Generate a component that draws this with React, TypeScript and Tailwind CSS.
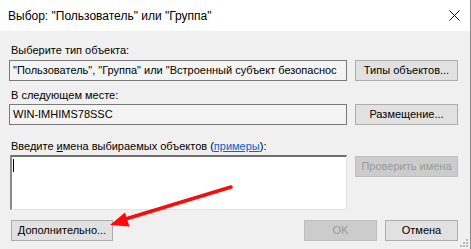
import React from 'react';

const btn = 'flex items-center justify-center h-[21px] bg-[#e1e1e1] border border-[#adadad] text-black';
const btnOff = 'flex items-center justify-center h-[21px] bg-[#cccccc] border border-[#bfbfbf] text-[#9a9a9a]';

function CloseIcon() {
  return (
    <svg width="11" height="11" viewBox="0 0 11 11">
      <path d="M0.5 0.5 L10.5 10.5 M10.5 0.5 L0.5 10.5" stroke="#111" strokeWidth="1" />
    </svg>
  );
}

function Grip() {
  const dots = [[5, 0], [2, 3], [5, 3], [-1, 6], [2, 6], [5, 6]];
  return (
    <svg width="8" height="9" viewBox="-1 0 8 9">
      {dots.map(([x, y], i) => <rect key={i} x={x} y={y} width="2" height="2" fill="#b8b8b8" />)}
    </svg>
  );
}

export default function App() {
  return (
    <div className="relative w-[471px] h-[249px] overflow-hidden bg-[#f0f0f0] border-r border-[#8a8a8a] text-[11px] text-black font-['Liberation_Sans',Arial,sans-serif]">
      {/* Title bar */}
      <div className="flex items-center justify-between h-[31px] bg-white pl-[8px] pr-[10px]">
        <span className="text-[12px] leading-none">Выбор: "Пользователь" или "Группа"</span>
        <CloseIcon />
      </div>

      <div className="pl-[9px] pr-[12px]">
        <p className="mt-[12px] h-[15px] leading-[15px] pl-[2px]">Выберите тип объекта:</p>
        <div className="flex gap-[8px] mt-[2px]">
          <div className="w-[338px] h-[21px] flex items-center px-[3px] bg-[#f4f4f4] border border-[#7a7a7a] overflow-hidden whitespace-nowrap">
            "Пользователь", "Группа" или "Встроенный субъект безопаснос
          </div>
          <button className={`${btn} w-[103px]`}>Типы объектов...</button>
        </div>

        <p className="mt-[7px] h-[15px] leading-[15px] pl-[2px]">В следующем месте:</p>
        <div className="flex gap-[8px] mt-[1px]">
          <div className="w-[338px] h-[21px] flex items-center px-[3px] bg-[#f4f4f4] border border-[#7a7a7a] overflow-hidden whitespace-nowrap">
            WIN-IMHIMS78SSC
          </div>
          <button className={`${btn} w-[103px]`}>Размещение...</button>
        </div>

        <p className="mt-[14px] h-[15px] leading-[15px] pl-[2px]">
          Введите <span className="underline">и</span>мена выбираемых объектов (
          <span className="text-[#0066cc] underline">примеры</span>):
        </p>
        <div className="flex items-start gap-[8px] mt-[1px]">
          <div className="ml-[1px] w-[337px] h-[55px] bg-white border-t-2 border-l-2 border-t-[#6f6f6f] border-l-[#8a8a8a] border-r border-b border-r-[#e3e3e3] border-b-[#e3e3e3] pl-[1px] pt-[2px]">
            <div className="w-px h-[13px] bg-black" />
          </div>
          <button className={`${btnOff} w-[103px] mt-[1px]`}>Проверить имена</button>
        </div>

        <div className="flex items-center mt-[10px]">
          <button className={`${btn} ml-[2px] w-[102px]`}>Дополнительно...</button>
          <div className="flex-1" />
          <div className="flex gap-[8px]">
            <button className={`${btnOff} w-[73px]`}>OK</button>
            <button className={`${btn} w-[73px]`}>Отмена</button>
          </div>
        </div>
      </div>

      <div className="absolute right-[2px] bottom-[1px]">
        <Grip />
      </div>

      {/* red arrow annotation */}
      <svg className="absolute inset-0 pointer-events-none" width="471" height="249" viewBox="0 0 471 249">
        <line x1="231" y1="187" x2="124" y2="219.5" stroke="#ff0a0a" strokeWidth="3.5" strokeLinecap="round" />
        <polygon points="110,225 125,212.5 129.5,226.5" fill="#ff0a0a" />
      </svg>
    </div>
  );
}
